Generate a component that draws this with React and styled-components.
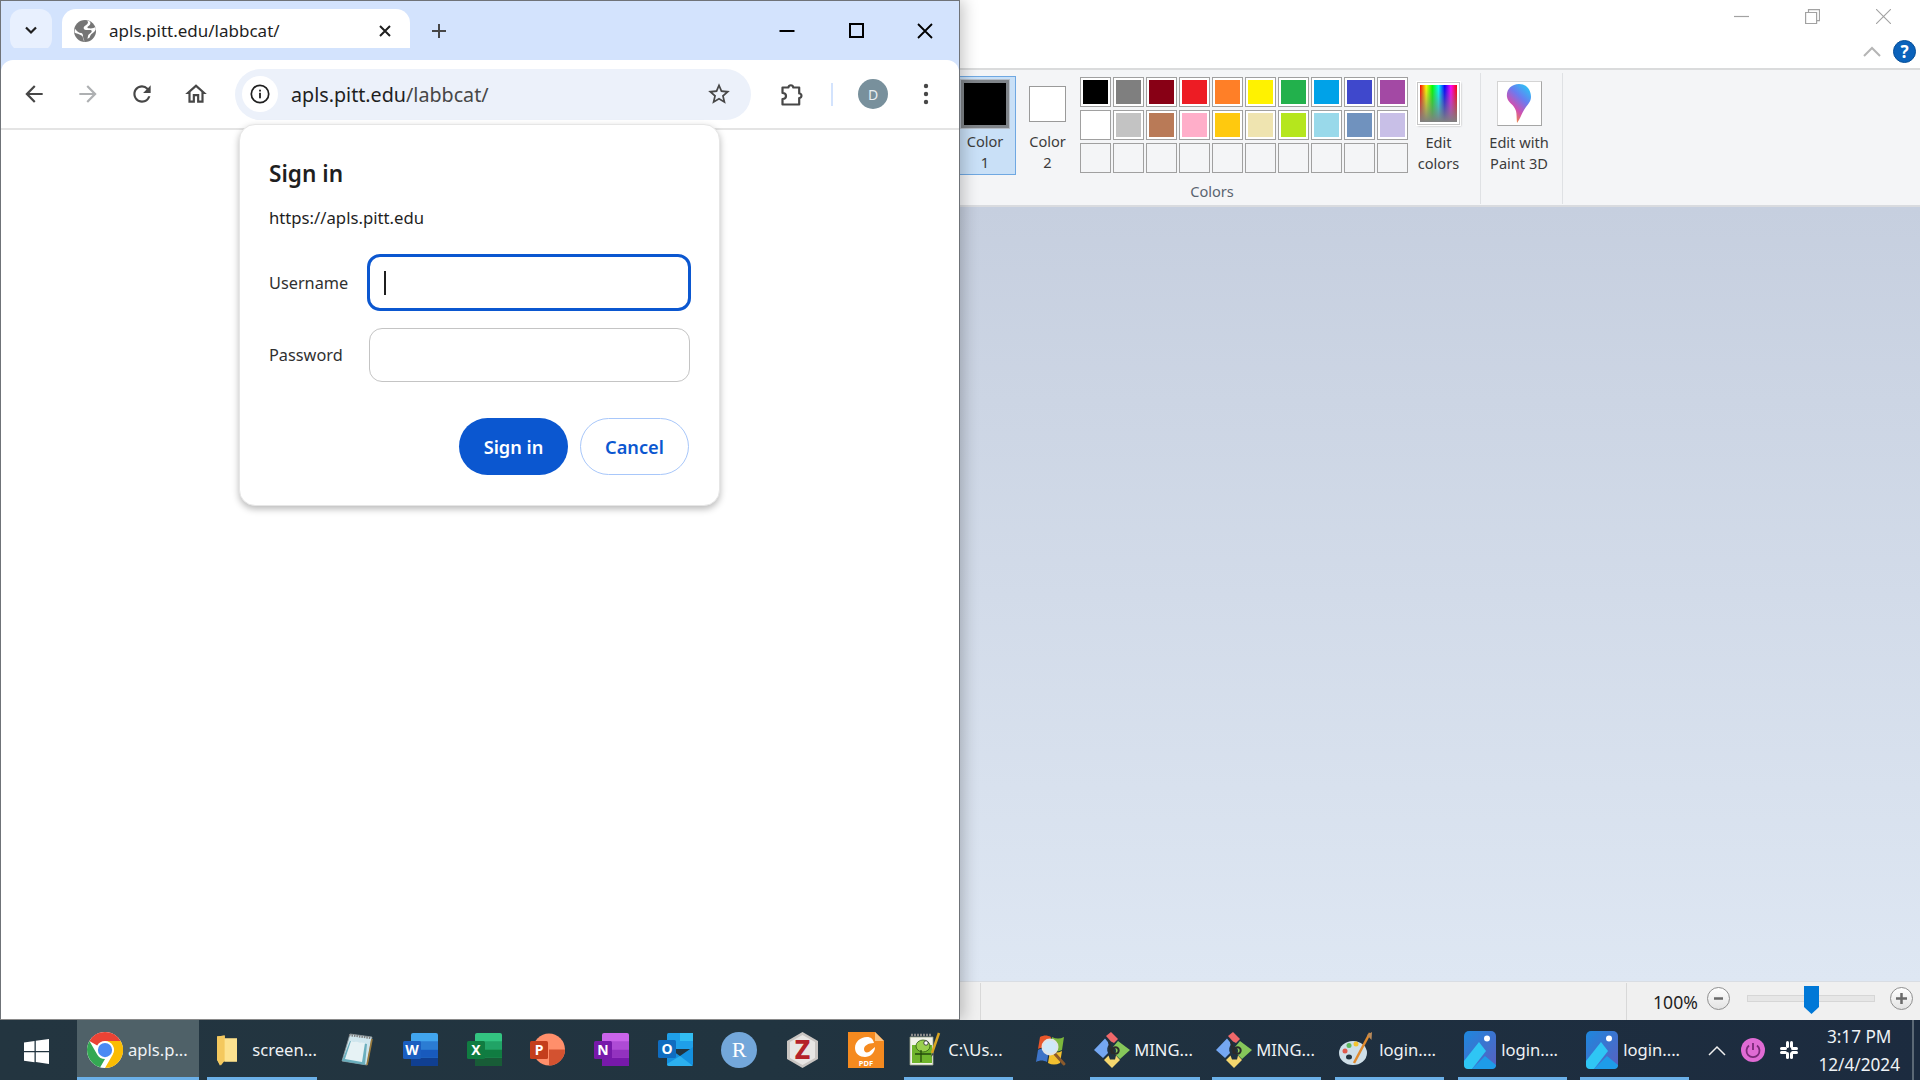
import React from 'react';
import styled, { createGlobalStyle } from 'styled-components';

const Global = createGlobalStyle`
  html, body { margin: 0; padding: 0; width: 1920px; height: 1080px; overflow: hidden; background: #fff; }
  * { box-sizing: border-box; }
  body { font-family: "Noto Sans", "Open Sans", sans-serif; color: #1f1f1f; }
`;

const Desktop = styled.div`
  width: 1920px; height: 1080px; display: flex; flex-direction: column; overflow: hidden;
`;
const Workspace = styled.div`
  display: flex; height: 1020px; position: relative;
`;

/* Chrome window */
const ChromeWindow = styled.div`
  width: 960px; height: 1020px; flex: none; display: flex; flex-direction: column; position: relative; z-index: 2;
  border: 1px solid #6f7378; border-bottom-color: #8a8a8a; background: #fff;
  box-shadow: 4px 0 14px rgba(0,0,0,.22);
`;
const TabStrip = styled.div`
  height: 59px; flex: none; background: #d3e3fd; display: flex; align-items: flex-end; padding-left: 9px;
`;
const TabSearch = styled.div`
  width: 42px; height: 42px; margin-bottom: 9px; border-radius: 12px; background: #e8f0fe;
  display: flex; align-items: center; justify-content: center;
`;
const Tab = styled.div`
  position: relative; width: 348px; height: 51px; margin-left: 10px; background: #fff; border-radius: 14px 14px 0 0;
  display: flex; align-items: center; padding: 0 18px 8px 12px;
  &::before, &::after { content: ""; position: absolute; bottom: 0; width: 12px; height: 12px; }
  &::before { left: -12px; background: radial-gradient(circle at 0 0, transparent 11.5px, #fff 12px); }
  &::after { right: -12px; background: radial-gradient(circle at 100% 0, transparent 11.5px, #fff 12px); }
`;
const TabTitle = styled.span`
  margin-left: 13px; font-size: 17px; flex: 1; color: #1f1f1f; white-space: nowrap;
`;
const NewTab = styled.div`
  width: 30px; height: 30px; margin: 0 0 14px 14px; display: flex; align-items: center; justify-content: center;
`;
const WindowButtons = styled.div`
  margin-left: auto; height: 100%; display: flex; align-items: flex-start; padding: 22px 26px 0 0; gap: 53px;
`;
const Toolbar = styled.div`
  height: 70px; flex: none; display: flex; align-items: center; position: relative; background: #fff;
  border-radius: 12px 12px 0 0; border-bottom: 2px solid #e4e4e4; padding: 0 0 0 20px;
  box-shadow: 0 -12px 0 0 #d3e3fd;
`;
const NavButton = styled.div`
  width: 26px; height: 26px; margin-right: ${p => p.$mr ?? 28}px; margin-left: ${p => p.$ml || 0}px; flex: none; color: ${p => p.$color || '#474747'};
  display: flex; align-items: center; justify-content: center;
`;
const Omnibox = styled.div`
  width: 516px; height: 51px; border-radius: 26px; background: #ecf1fa; margin-left: 26px; flex: none;
  display: flex; align-items: center; padding: 0 12px 0 7px;
`;
const InfoChip = styled.div`
  width: 36px; height: 36px; border-radius: 50%; background: #fff; display: flex; align-items: center; justify-content: center; flex: none;
`;
const UrlText = styled.div`
  margin-left: 13px; font-size: 19.7px; color: #1f1f1f; flex: 1; white-space: nowrap;
  span { color: #474747; }
`;
const ToolbarDivider = styled.div`
  width: 2px; height: 23px; background: #d3e3fd; margin: 0 25px 0 26px; flex: none;
`;
const Avatar = styled.div`
  width: 30px; height: 30px; border-radius: 50%; background: #78909c; color: #e8eef2; font-size: 14px; flex: none;
  display: flex; align-items: center; justify-content: center;
`;
const Page = styled.div`
  flex: 1; position: relative; background: #fff;
`;

/* Sign-in dialog */
const Dialog = styled.div`
  position: absolute; left: 238px; top: -6px; width: 481px; height: 382px; background: #fff; border-radius: 16px;
  border: 1px solid #e6e6e6; box-shadow: 0 3px 7px rgba(0,0,0,.28); padding: 34px 30px 0 29px;
  display: flex; flex-direction: column;
`;
const DialogTitle = styled.h2`
  margin: 0; font-size: 22.6px; line-height: 30px; font-weight: 600; color: #1f1f1f;
`;
const Origin = styled.div`
  margin-top: 17px; font-size: 16.7px; line-height: 24px; color: #1f1f1f;
`;
const FormRow = styled.div`
  display: flex; align-items: center; height: ${p => p.$h}px; margin-top: ${p => p.$mt}px;
`;
const FieldLabel = styled.label`
  width: ${p => p.$w}px; font-size: 16.3px; color: #303030; flex: none;
`;
const Field = styled.div`
  flex: none; border-radius: 13px; background: #fff; display: flex; align-items: center;
  width: ${p => p.$focus ? 324 : 321}px; height: ${p => p.$focus ? 57 : 54}px;
  border: ${p => p.$focus ? '3px solid #0b57d0' : '1.5px solid #c4c4c4'};
  padding-left: 14px;
`;
const Caret = styled.div`
  width: 1.5px; height: 24px; background: #1f1f1f;
`;
const Actions = styled.div`
  display: flex; justify-content: flex-end; gap: 12px; margin-top: 36px; padding-right: 0;
`;
const DialogButton = styled.button`
  width: 109px; height: 57px; border-radius: 29px; font: 600 18.2px "Noto Sans", sans-serif; padding: 0; cursor: pointer;
  background: ${p => p.$primary ? '#0b57d0' : '#fff'}; color: ${p => p.$primary ? '#fff' : '#0b57d0'};
  border: ${p => p.$primary ? 'none' : '1.5px solid #a8c7fa'};
`;

/* Paint window */
const PaintWindow = styled.div`
  flex: 1; display: flex; flex-direction: column; background: #fff; min-width: 0;
`;
const PaintTitle = styled.div`
  height: 68px; flex: none; background: #fff; display: flex; flex-direction: column; align-items: flex-end;
  padding: 9px 4px 0 0;
`;
const PaintControls = styled.div`
  display: flex; gap: 56px; height: 15px; padding-right: 25px; margin-bottom: 15px;
`;
const PaintHelpRow = styled.div`
  display: flex; align-items: center; gap: 12px; height: 24px;
`;
const Ribbon = styled.div`
  height: 139px; flex: none; background: #f4f5f7; border-top: 2px solid #dadbdc; border-bottom: 2px solid #d9dbdf;
  display: flex; padding-top: 3px;
`;
const ColorsGroup = styled.div`
  width: 521px; flex: none; height: 131px; border-right: 1.5px solid #dfe1e4; display: flex; flex-direction: column;
`;
const ColorsRow = styled.div`
  display: flex; height: 108px; padding-top: 3px;
`;
const ColorSlot = styled.div`
  height: 99px; flex: none; width: ${p => p.$w}px; margin-left: ${p => p.$ml || 0}px;
  display: flex; flex-direction: column; align-items: center;
  padding-top: ${p => p.$pt}px; padding-right: ${p => p.$pr || 0}px; position: relative;
  background: ${p => p.$active ? '#c9e0f7' : 'transparent'};
  border: 1px solid ${p => p.$active ? '#6fa8e2' : 'transparent'}; border-left: none;
`;
const BigSwatch = styled.div`
  width: ${p => p.$w}px; height: ${p => p.$h}px; background: ${p => p.$color};
  border: ${p => p.$thick ? '3px solid #7f8489' : '1.5px solid #9a9a9a'};
  outline: ${p => p.$thick ? '1px solid #b6bec8' : 'none'};
  margin-bottom: ${p => p.$mb}px; flex: none;
`;
const RibbonLabel = styled.div`
  font-size: 14.6px; line-height: 21px; text-align: center; color: #3c3c3c; white-space: pre-line;
`;
const Palette = styled.div`
  display: grid; grid-template-columns: repeat(10, 31px); grid-auto-rows: 30px; gap: 3px 2px; margin-left: 2px; flex: none; margin-top: 1px;
`;
const Swatch = styled.div`
  background: ${p => p.$color || '#f4f5f7'}; border: 1px solid #a0a0a0;
  box-shadow: ${p => p.$color ? 'inset 0 0 0 2px #fff' : 'none'};
`;
const RainbowBox = styled.div`
  width: 43px; height: 43px; border: 1.5px solid #c5c5c5; outline: 1px solid #fff; margin-bottom: 7px; flex: none;
  padding: 2px; background: #fff; box-shadow: 1px 1px 2px rgba(0,0,0,.3);
  &::before { content: ""; display: block; width: 100%; height: 100%;
    background: linear-gradient(to bottom, rgba(128,128,128,0) 0%, rgba(128,128,128,1) 100%),
      linear-gradient(to right, #f00, #ff0, #0f0, #0ff, #00f, #f0f, #f00); }
`;
const ColorsLabel = styled.div`
  font-size: 14.6px; text-align: center; color: #5a6470; padding-right: 16px; line-height: 20px;
`;
const Paint3DGroup = styled.div`
  width: 82px; height: 131px; flex: none; border-right: 1.5px solid #dfe1e4; display: flex; flex-direction: column; align-items: center;
  padding: 8px 5px 0 0;
`;
const Paint3DIcon = styled.div`
  width: 45px; height: 45px; background: #fff; border: 1.5px solid #a6a6a6; border-top-color: #d4d4d4; border-left-color: #d4d4d4;
  display: flex; align-items: center; justify-content: center; margin-bottom: 6px; flex: none;
`;
const Canvas = styled.div`
  flex: 1; background: linear-gradient(to bottom, #c6cfdf 0%, #dee7f3 100%);
`;
const StatusBar = styled.div`
  height: 39px; flex: none; background: #f0f0f0; border-top: 1.5px solid #d9dde3; display: flex; align-items: center; position: relative;
`;
const StatusSegment = styled.div`
  width: ${p => p.$w}px; height: 37px; flex: none; border-left: ${p => p.$first ? 'none' : '1.5px solid #d8d8d8'};
`;
const ZoomPart = styled.div`
  flex: 1; border-left: 1.5px solid #d8d8d8; height: 37px; display: flex; align-items: center; padding-left: 26px;
`;
const ZoomText = styled.span`
  font-size: 17.6px; width: 47px; color: #1f1f1f; padding-top: 2px; white-space: nowrap;
`;
const ZoomBtn = styled.div`
  width: 23px; height: 23px; border-radius: 50%; border: 1.5px solid #8f8f8f; background: linear-gradient(#fff, #e3e3e3);
  display: flex; align-items: center; justify-content: center; flex: none; margin: ${p => p.$m}; margin-bottom: 5px;
  color: #6a6a6a;
`;
const SliderTrack = styled.div`
  width: 128px; height: 7px; background: #e6e6e6; border: 1px solid #d6d6d6; position: relative; flex: none; margin: 0 0 6px 17px;
`;
const SliderThumb = styled.svg`
  position: absolute; left: 56px; top: -10px;
`;

/* Taskbar */
const Taskbar = styled.div`
  height: 60px; flex: none; display: flex; color: #f2f5f7; position: relative; z-index: 3;
  background: linear-gradient(to right, #233540 0%, #213440 40%, #1c2b3f 100%);
`;
const StartButton = styled.div`
  width: 77px; display: flex; align-items: center; justify-content: center; flex: none; padding: 2px 5px 0 0;
`;
const TaskItem = styled.div`
  flex: none; height: 60px; width: ${p => p.$w}px; margin-left: ${p => p.$ml || 0}px;
  display: flex; align-items: center; justify-content: ${p => p.$label ? 'flex-start' : 'center'};
  padding-left: ${p => p.$label ? (p.$pl ?? 5) : 0}px; padding-top: 2px;
  border-bottom: 3px solid ${p => p.$open ? '#6bb0e8' : 'transparent'};
  background: ${p => p.$active ? '#4f6168' : 'transparent'};
  position: relative;
`;
const TaskLabel = styled.span`
  margin-left: ${p => p.$ml ?? 5}px; font-size: 16.6px; color: #eef2f5; white-space: nowrap;
`;
const Tray = styled.div`
  display: flex; align-items: center; margin-left: 19px; flex: none; height: 60px;
`;
const TraySpace = styled.span`
  width: ${p => p.$w}px;
`;
const Clock = styled.div`
  width: 92px; margin-left: 14px; text-align: center; font-size: 17.2px; line-height: 28px; padding-top: 2px; color: #eef2f5; white-space: nowrap;
`;
const EdgeLine = styled.div`
  position: absolute; right: 6px; top: 0; bottom: 0; width: 2px; background: #5b6875;
`;

/* icons */
const Svg = ({ s = 24, w, h, vb = '0 0 24 24', children, ...r }) => (
  <svg width={w ?? s} height={h ?? s} viewBox={vb} {...r}>{children}</svg>
);
const P = ({ d }) => <Svg s={26}><path d={d} fill="currentColor" /></Svg>;
const BACK = 'M20 11H7.83l5.59-5.59L12 4l-8 8 8 8 1.41-1.41L7.83 13H20v-2z';
const FWD = 'M4 11h12.17l-5.59-5.59L12 4l8 8-8 8-1.41-1.41L16.17 13H4v-2z';
const RELOAD = 'M17.65 6.35A7.96 7.96 0 0 0 12 4c-4.42 0-7.99 3.58-7.99 8s3.57 8 7.99 8c3.73 0 6.84-2.55 7.73-6h-2.08A5.99 5.99 0 0 1 12 18c-3.31 0-6-2.69-6-6s2.69-6 6-6c1.66 0 3.14.69 4.22 1.78L13 11h7V4l-2.35 2.35z';
const HOME = 'M12 5.69l5 4.5V18h-2v-6H9v6H7v-7.81l5-4.5M12 3L2 12h3v8h6v-6h2v6h6v-8h3L12 3z';
const STAR = 'M22 9.24l-7.19-.62L12 2 9.19 8.63 2 9.24l5.46 4.73L5.82 21 12 17.27 18.18 21l-1.63-7.03L22 9.24zM12 15.4l-3.76 2.27 1-4.28-3.32-2.88 4.38-.38L12 6.1l1.71 4.04 4.38.38-3.32 2.88 1 4.28L12 15.4z';

const Globe = () => (
  <Svg s={22} vb="0 0 22 22">
    <circle cx="11" cy="11" r="11" fill="#757575" />
    <path d="M0.800 8.500C2.500 11 5 13 7 13c1.500 0 2 1.500 2 3 0 2 1 4 1.800 6H11c-3-3-1-5-3.500-6.500C5 14 2.200 13.500.5 12.500z" fill="#fff" />
    <path d="M13 .4c1.800 1.400 1 3.400-.8 4.600-1.500 1-3 2-2.500 3.600.5 1.600 3 1.600 4.800 1.400 1.500-.2 3-.3 3.200 1 .2 1.400-1.500 2.400-2.700 3.200-1.200.8-1 3-1.600 4.600l2 -1c1-2 1-3 2.500-4 1.600-1 3.500-3 3.900-4.500l-.5-2.300c-.8.6-2.600 1.300-4.600 1.400-1.500 0-3.200 0-3.300-.8 0-1 1.400-1.500 2.300-2.500.8-1 1-2.300.2-3.600z" fill="#fff" />
  </Svg>
);
const Chevron = () => (
  <Svg s={14} vb="0 0 14 14"><path d="M2 4.500l5 5 5-5" fill="none" stroke="#1f1f1f" strokeWidth="2.200" /></Svg>
);
const TabClose = () => (
  <Svg s={14} vb="0 0 14 14"><path d="M2 2l10 10M12 2L2 12" stroke="#1f1f1f" strokeWidth="2" /></Svg>
);
const Plus = () => (
  <Svg s={16} vb="0 0 16 16"><path d="M8 1v14M1 8h14" stroke="#474747" strokeWidth="2" /></Svg>
);
const WinMin = () => <Svg s={16} vb="0 0 16 16"><path d="M0.500 8h15" stroke="#000" strokeWidth="2" /></Svg>;
const WinMax = () => <Svg s={16} vb="0 0 16 16"><rect x="2" y="1" width="13" height="13" fill="none" stroke="#000" strokeWidth="2" /></Svg>;
const WinClose = () => <Svg s={16} vb="0 0 16 16"><path d="M1 1l14 14M15 1L1 15" stroke="#000" strokeWidth="1.800" /></Svg>;
const Info = () => (
  <Svg s={20} vb="0 0 20 20">
    <circle cx="10" cy="10" r="8.700" fill="none" stroke="#1f1f1f" strokeWidth="1.700" />
    <rect x="9.100" y="8.800" width="1.800" height="5.500" fill="#1f1f1f" />
    <rect x="9.100" y="5.700" width="1.800" height="1.800" fill="#1f1f1f" />
  </Svg>
);
const Puzzle = () => (
  <Svg s={26} vb="0 0 26 26">
    <path d="M3.500 6.500h6c-.3-3 5-3 4.700 0h6v6c3-.3 3 4.700 0 4.500v6.500H3.500v-5.500c3 0 3.500-1.500 3.500-3s-.6-3-3.500-3z" fill="none" stroke="#474747" strokeWidth="2.200" strokeLinejoin="round" />
  </Svg>
);
const Dots = () => (
  <Svg s={26} vb="0 0 26 26">
    <circle cx="13" cy="5" r="2.200" fill="#474747" /><circle cx="13" cy="13" r="2.200" fill="#474747" /><circle cx="13" cy="21" r="2.200" fill="#474747" />
  </Svg>
);
const PMin = () => <Svg w={15} h={15} vb="0 0 15 15"><path d="M0 7.500h15" stroke="#a2a2a2" strokeWidth="1.200" /></Svg>;
const PRestore = () => (
  <Svg s={15} vb="0 0 15 15"><path d="M3.500 3V.6h11v11H12M.6 3.500h11v11H.6z" fill="none" stroke="#a2a2a2" strokeWidth="1.200" /></Svg>
);
const PClose = () => <Svg s={15} vb="0 0 15 15"><path d="M0 0l15 15M15 0L0 15" stroke="#a2a2a2" strokeWidth="1.100" /></Svg>;
const RibbonUp = () => <Svg w={18} h={11} vb="0 0 18 11"><path d="M1 10l8-8 8 8" fill="none" stroke="#b5b5b5" strokeWidth="2" /></Svg>;
const Help = () => (
  <Svg s={23} vb="0 0 23 23">
    <circle cx="11.500" cy="11.500" r="11" fill="#0a62bb" stroke="#064e98" strokeWidth="1" />
    <text x="11.500" y="17.500" textAnchor="middle" fontSize="17" fontWeight="700" fill="#fff" fontFamily="Noto Sans">?</text>
  </Svg>
);
const Balloon = () => (
  <Svg w={30} h={41} vb="0 0 30 41">
    <defs>
      <linearGradient id="bal" x1="0.800" y1="0" x2="0.200" y2="1">
        <stop offset="0" stopColor="#29c6f6" /><stop offset=".35" stopColor="#6a7cf0" /><stop offset=".65" stopColor="#d04fb0" /><stop offset="1" stopColor="#f8a020" />
      </linearGradient>
    </defs>
    <path d="M15 1C7 1 2 7 3 14c.8 6 7 7 9 14 .8 3 .6 8 1 12 3-4 4-8 7-13 3-5 7-8 7-13C27 7 23 1 15 1z" fill="url(#bal)" />
  </Svg>
);

/* taskbar app icons */
const ChromeIcon = () => (
  <Svg s={36} vb="0 0 48 48">
    <circle cx="24" cy="24" r="24" fill="#fff" />
    <path d="M24 0a24 24 0 0 1 20.800 12H24a12 12 0 0 0-10.400 6L3.200 12A24 24 0 0 1 24 0z" fill="#ea4335" />
    <path d="M3.200 12l10.400 18A12 12 0 0 0 24 36l-6.400 11.100A24 24 0 0 1 3.200 12z" fill="#34a853" />
    <path d="M44.800 12A24 24 0 0 1 24 48l10.400-18A12 12 0 0 0 24 12z" fill="#fbbc04" />
    <circle cx="24" cy="24" r="9.500" fill="#4a8af4" />
  </Svg>
);
const WinLogo = () => (
  <Svg s={25} vb="0 0 25 25">
    <path d="M0 3.500l10.500-1.500v10H0zM11.800 1.800L25 0v12H11.800zM0 13.200h10.500v10L0 21.700zM11.800 13.200H25V25l-13.200-1.900z" fill="#fff" />
  </Svg>
);
const Folder = () => (
  <Svg w={21} h={32} vb="0 0 21 32">
    <path d="M0 2l8 -1v3h13v24H6l-3 4-3-6z" fill="#fbd774" />
    <path d="M0 2l8-1v26l-4 5-4-6z" fill="#f4c85e" />
    <path d="M8 4h13v24H8z" fill="#fde28f" />
  </Svg>
);
const NotepadIcon = () => (
  <Svg w={32} h={33} vb="0 0 32 33">
    <path d="M9 1l22 3-5 28L1 28z" fill="#cfe6ee" stroke="#8e989c" strokeWidth=".8" />
    <path d="M1 28L9 8l17 3-2 21z" fill="#5fa9b8" opacity=".9" />
    <path d="M10 8l14 2-3 19L4 26z" fill="#e6f2f5" />
    <path d="M8 2l22 3" stroke="#7d7d7d" strokeWidth="2.200" strokeDasharray="1.500 1" />
    <path d="M31 6l-5 26" stroke="#9a7a3c" strokeWidth="1.600" />
  </Svg>
);
const OfficeIcon = ({ back, letter, tile, parts }) => (
  <Svg w={35} h={33} vb="0 0 35 33">
    {back === 'round'
      ? <circle cx="19" cy="16.500" r="16" fill={parts[0]} />
      : <rect x="8" y="0" width="27" height="33" rx="2" fill={parts[0]} />}
    {back !== 'round' && parts.slice(1).map((c, i) => (
      <rect key={c + i} x="8" y={(i + 1) * 8.250} width="27" height="8.250" fill={c} />
    ))}
    {back === 'round' && <path d="M19 16.500h16a16 16 0 0 1-16 16z" fill={parts[1]} />}
    <rect x="0" y="8" width="18" height="18" rx="1.500" fill={tile} />
    <text x="9" y="22" textAnchor="middle" fontSize="14" fontWeight="700" fill="#fff" fontFamily="Noto Sans">{letter}</text>
  </Svg>
);
const OutlookIcon = () => (
  <Svg w={35} h={33} vb="0 0 35 33">
    <rect x="9" y="0" width="26" height="16" rx="1.500" fill="#1f9fe8" />
    <rect x="22" y="0" width="13" height="8" fill="#32bdf2" />
    <path d="M9 14l13 9 13-9v17a2 2 0 0 1-2 2H11a2 2 0 0 1-2-2z" fill="#1490df" />
    <path d="M9 31l13-8 13 10H11a2 2 0 0 1-2-2z" fill="#2cb0ee" />
    <rect x="0" y="7" width="18" height="18" rx="1.500" fill="#0f6cc0" />
    <text x="9" y="21" textAnchor="middle" fontSize="14" fontWeight="700" fill="#fff" fontFamily="Noto Sans">O</text>
  </Svg>
);
const RIcon = () => (
  <Svg s={36} vb="0 0 36 36">
    <circle cx="18" cy="18" r="18" fill="#73a7da" />
    <text x="18" y="25" textAnchor="middle" fontSize="22" fill="#fff" fontFamily="Liberation Serif">R</text>
  </Svg>
);
const ZoteroIcon = () => (
  <Svg w={31} h={36} vb="0 0 31 36">
    <path d="M15.500 0L31 9v18l-15.500 9L0 27V9z" fill="#c9c5c2" />
    <path d="M15.500 3L28 10v16l-12.500 7L3 26V10z" fill="#e8e6e4" />
    <text x="15.500" y="27" textAnchor="middle" fontSize="26" fontWeight="800" fill="#b5222a" fontFamily="Noto Sans">Z</text>
  </Svg>
);
const FoxitIcon = () => (
  <Svg s={36} vb="0 0 36 36">
    <path d="M0 0h27l9 9v27H0z" fill="#f58a1f" />
    <path d="M27 0l9 9h-9z" fill="#fbc27f" />
    <path d="M19 5c-7 0-12 5-12 11 0 6 5 9 10 9s10-4 10-10l-6 5c-3 1-5 0-5-3 0-3 4-6 10-6-1-4-3-6-7-6z" fill="#fff" />
    <text x="18" y="33.500" textAnchor="middle" fontSize="7.500" fontWeight="700" fill="#fff" fontFamily="Noto Sans">PDF</text>
  </Svg>
);
const NotepadPP = () => (
  <Svg w={32} h={36} vb="0 0 32 36">
    <path d="M1 5h23v28H1z" fill="#f2f3ea" stroke="#9aa28c" strokeWidth=".8" />
    <path d="M2 3h21" stroke="#888" strokeWidth="2.500" strokeDasharray="2 1" />
    <path d="M3 13h20v18H3z" fill="#6fb52c" />
    <ellipse cx="14" cy="14" rx="7" ry="6" fill="#9ad04e" stroke="#2d5a10" strokeWidth=".8" />
    <circle cx="17" cy="11" r="2.200" fill="#fff" stroke="#222" strokeWidth=".8" />
    <path d="M6 22h16M12 18v12" stroke="#254a0c" strokeWidth="1.300" />
    <path d="M30 1L23 21" stroke="#d9a520" strokeWidth="2.500" />
    <path d="M23 21l-1 4 3-3" fill="#444" />
  </Svg>
);
const SearchFlag = () => (
  <Svg w={34} h={34} vb="0 0 34 34">
    <path d="M5 4c4-2 7-2 11 0l-2 12c-4-2-7-2-11 0z" fill="#e8562a" />
    <path d="M17 4c4 2 8 2 12 0l-2 13c-4 2-8 2-12 0z" fill="#7cb73c" />
    <path d="M3 17c4-2 7-2 11 0l-2 12c-4-2-7-2-11 0z" fill="#3d74c8" />
    <path d="M15 18c4 2 8 2 12 0l-2 12c-4 2-8 2-12 0z" fill="#f2c02f" />
    <path d="M20 21l9 10" stroke="#8a5a2c" strokeWidth="3" strokeLinecap="round" />
    <circle cx="15" cy="14" r="7.500" fill="#cfe8f8" stroke="#dfe3e6" strokeWidth="2" />
  </Svg>
);
const GitIcon = () => (
  <Svg s={36} vb="0 0 36 36">
    <path d="M12 4l5-4 7 7-4 4-3-1.500z" fill="#f0686a" />
    <path d="M24 9l12 9-10 9-5-5c2-3 1-6-2-7z" fill="#86c75a" />
    <path d="M11 6.500l4.500 5.500c-2.500 2.500-3 6-1.500 9l-5 5L0 18z" fill="#74a7f2" />
    <path d="M10 28l4.500-4.500 1.500 4h5l1-4 4 4.500-8 8z" fill="#f5d76e" />
    <path d="M15 10l3 12" stroke="#2b2b2b" strokeWidth="2.200" />
    <circle cx="21.500" cy="18.500" r="3.200" fill="none" stroke="#2b2b2b" strokeWidth="2" />
  </Svg>
);
const PaintIcon = () => (
  <Svg w={34} h={36} vb="0 0 34 36">
    <ellipse cx="14" cy="21" rx="14" ry="12" fill="#cfdfe8" />
    <ellipse cx="10" cy="25" rx="3" ry="2.500" fill="#223440" />
    <circle cx="6" cy="19" r="2.500" fill="#e05a4c" />
    <circle cx="10" cy="13.500" r="2.500" fill="#5cb85c" />
    <circle cx="17" cy="12" r="2.500" fill="#f4c42e" />
    <path d="M31 1L15 31" stroke="#e08a2e" strokeWidth="2.500" />
    <path d="M28 3l5-3-.5 8z" fill="#b98a5a" />
  </Svg>
);
const PhotosIcon = ({ id }) => (
  <Svg w={32} h={38} vb="0 0 32 38">
    <defs>
      <linearGradient id={id} x1="0" y1="0" x2="1" y2="1">
        <stop offset="0" stopColor="#1d88de" /><stop offset="1" stopColor="#5a5fc0" />
      </linearGradient>
    </defs>
    <rect width="32" height="38" rx="5" fill={`url(#${id})`} />
    <circle cx="23" cy="7.500" r="3" fill="#fff" />
    <path d="M0 30l15-19 7 9 -14 18H4a4 4 0 0 1-4-4z" fill="#2fc6f4" />
    <path d="M8 38l13-13 11 9v0a4 4 0 0 1-4 4z" fill="#1e9ce8" />
  </Svg>
);
const TrayUp = () => <Svg w={18} h={11} vb="0 0 18 11"><path d="M1 10l8-8 8 8" fill="none" stroke="#f0f0f0" strokeWidth="1.500" /></Svg>;
const PowerIcon = () => (
  <Svg w={24} h={24} vb="0 0 24 24">
    <circle cx="12" cy="12" r="12" fill="#e06bd4" />
    <path d="M12 5v7" stroke="#7a2a78" strokeWidth="1.800" />
    <path d="M8 7.500a6.500 6.500 0 1 0 8 0" fill="none" stroke="#7a2a78" strokeWidth="1.800" />
  </Svg>
);
const SlackIcon = () => (
  <Svg s={20} vb="0 0 20 20">
    <g fill="#fff">
      <rect x="7" y="1" width="3" height="7" rx="1.500" /><rect x="11" y="1" width="3" height="7" rx="1.500" />
      <rect x="12" y="7" width="7" height="3" rx="1.500" /><rect x="12" y="11" width="7" height="3" rx="1.500" />
      <rect x="1" y="7" width="7" height="3" rx="1.500" /><rect x="1" y="11" width="7" height="3" rx="1.500" />
      <rect x="7" y="12" width="3" height="7" rx="1.500" /><rect x="11" y="12" width="3" height="7" rx="1.500" />
    </g>
  </Svg>
);

const ROW1 = ['#000000', '#7f7f7f', '#880015', '#ed1c24', '#ff7f27', '#fff200', '#22b14c', '#00a2e8', '#3f48cc', '#a349a4'];
const ROW2 = ['#ffffff', '#c3c3c3', '#b97a57', '#ffaec9', '#ffc90e', '#efe4b0', '#b5e61d', '#99d9ea', '#7092be', '#c8bfe7'];
const ROW3 = Array(10).fill(null);

const pinned = [
  ['n', <NotepadIcon />],
  ['w', <OfficeIcon letter="W" tile="#1a5ec0" parts={['#41a5ee', '#2b7cd3', '#185abd', '#103f91']} />],
  ['x', <OfficeIcon letter="X" tile="#107c41" parts={['#33c481', '#21a366', '#107c41', '#185c37']} />],
  ['p', <OfficeIcon back="round" letter="P" tile="#c43e1c" parts={['#ff8f6b', '#d35230']} />],
  ['o', <OfficeIcon letter="N" tile="#7719aa" parts={['#ca64ea', '#ae4bd5', '#9332bf', '#7719aa']} />],
  ['ol', <OutlookIcon />],
  ['r', <RIcon />],
  ['z', <ZoteroIcon />],
  ['f', <FoxitIcon />],
];

export default function App() {
  return (
    <Desktop>
      <Global />
      <Workspace>
        <ChromeWindow>
          <TabStrip>
            <TabSearch><Chevron /></TabSearch>
            <Tab>
              <Globe />
              <TabTitle>apls.pitt.edu/labbcat/</TabTitle>
              <TabClose />
            </Tab>
            <NewTab><Plus /></NewTab>
            <WindowButtons>
              <WinMin /><WinMax /><WinClose />
            </WindowButtons>
          </TabStrip>
          <Toolbar>
            <NavButton><P d={BACK} /></NavButton>
            <NavButton $color="#aeb0b2"><P d={FWD} /></NavButton>
            <NavButton><P d={RELOAD} /></NavButton>
            <NavButton $mr={0}><P d={HOME} /></NavButton>
            <Omnibox>
              <InfoChip><Info /></InfoChip>
              <UrlText>apls.pitt.edu<span>/labbcat/</span></UrlText>
              <NavButton $mr={7}><P d={STAR} /></NavButton>
            </Omnibox>
            <NavButton $mr={0} $ml={28}><Puzzle /></NavButton>
            <ToolbarDivider />
            <Avatar>D</Avatar>
            <NavButton $mr={0} $ml={25}><Dots /></NavButton>
          </Toolbar>
          <Page>
            <Dialog>
              <DialogTitle>Sign in</DialogTitle>
              <Origin>https://apls.pitt.edu</Origin>
              <FormRow $h={57} $mt={24}>
                <FieldLabel $w={98} htmlFor="u">Username</FieldLabel>
                <Field $focus id="u"><Caret /></Field>
              </FormRow>
              <FormRow $h={54} $mt={17}>
                <FieldLabel $w={100} htmlFor="p">Password</FieldLabel>
                <Field id="p" />
              </FormRow>
              <Actions>
                <DialogButton $primary>Sign in</DialogButton>
                <DialogButton>Cancel</DialogButton>
              </Actions>
            </Dialog>
          </Page>
        </ChromeWindow>
        <PaintWindow>
          <PaintTitle>
            <PaintControls><PMin /><PRestore /><PClose /></PaintControls>
            <PaintHelpRow><RibbonUp /><Help /></PaintHelpRow>
          </PaintTitle>
          <Ribbon>
            <ColorsGroup>
              <ColorsRow>
                <ColorSlot $w={56} $active $pt={3} $pr={5}>
                  <BigSwatch $w={48} $h={48} $thick $color="#000" $mb={3} />
                  <RibbonLabel>{'Color\n1'}</RibbonLabel>
                </ColorSlot>
                <ColorSlot $w={60} $ml={2} $pt={9}>
                  <BigSwatch $w={37} $h={36} $color="#fff" $mb={9} />
                  <RibbonLabel>{'Color\n2'}</RibbonLabel>
                </ColorSlot>
                <Palette>
                  {ROW1.map(c => <Swatch key={c} $color={c} />)}
                  {ROW2.map(c => <Swatch key={c} $color={c} />)}
                  {ROW3.map((c, i) => <Swatch key={i} />)}
                </Palette>
                <ColorSlot $w={62} $pt={5}>
                  <RainbowBox />
                  <RibbonLabel>{'Edit\ncolors'}</RibbonLabel>
                </ColorSlot>
              </ColorsRow>
              <ColorsLabel>Colors</ColorsLabel>
            </ColorsGroup>
            <Paint3DGroup>
              <Paint3DIcon><Balloon /></Paint3DIcon>
              <RibbonLabel>{'Edit with\nPaint 3D'}</RibbonLabel>
            </Paint3DGroup>
          </Ribbon>
          <Canvas />
          <StatusBar>
            <StatusSegment $w={20} $first />
            <StatusSegment $w={646} />
            <ZoomPart>
              <ZoomText>100%</ZoomText>
              <ZoomBtn $m="0 0 0 7px"><Svg s={11} vb="0 0 11 11"><path d="M1 5.500h9" stroke="currentColor" strokeWidth="2.500" /></Svg></ZoomBtn>
              <SliderTrack>
                <SliderThumb width="15" height="28" viewBox="0 0 15 28"><path d="M0 0h15v21l-7.500 7L0 21z" fill="#0078d7" /></SliderThumb>
              </SliderTrack>
              <ZoomBtn $m="0 0 0 15px"><Svg s={13} vb="0 0 13 13"><path d="M1 6.500h11M6.500 1v11" stroke="currentColor" strokeWidth="2.500" /></Svg></ZoomBtn>
            </ZoomPart>
          </StatusBar>
        </PaintWindow>
      </Workspace>
      <Taskbar>
        <StartButton><WinLogo /></StartButton>
        <TaskItem $w={122} $active $open $label $pl={10}><ChromeIcon /><TaskLabel>apls.p...</TaskLabel></TaskItem>
        <TaskItem $w={110} $ml={8} $open $label $pl={10}><Folder /><TaskLabel $ml={15}>screen...</TaskLabel></TaskItem>
        <TaskItem $w={8} />
        {pinned.map(([k, icon]) => <TaskItem key={k} $w={63.7}>{icon}</TaskItem>)}
        <TaskItem $w={109} $ml={6} $open $label><NotepadPP /><TaskLabel $ml={7}>C:\Us...</TaskLabel></TaskItem>
        <TaskItem $w={70} $ml={4}><SearchFlag /></TaskItem>
        <TaskItem $w={110} $ml={3} $open $label $pl={4}><GitIcon /><TaskLabel $ml={4}>MING...</TaskLabel></TaskItem>
        <TaskItem $w={109} $ml={12} $open $label $pl={4}><GitIcon /><TaskLabel $ml={4}>MING...</TaskLabel></TaskItem>
        <TaskItem $w={109} $ml={14} $open $label $pl={4}><PaintIcon /><TaskLabel $ml={6}>login....</TaskLabel></TaskItem>
        <TaskItem $w={109} $ml={14} $open $label $pl={6}><PhotosIcon id="ph1" /><TaskLabel>login....</TaskLabel></TaskItem>
        <TaskItem $w={109} $ml={13} $open $label $pl={6}><PhotosIcon id="ph2" /><TaskLabel>login....</TaskLabel></TaskItem>
        <Tray>
          <TrayUp />
          <TraySpace $w={15} />
          <PowerIcon />
          <TraySpace $w={14} />
          <SlackIcon />
          <Clock>3:17 PM<br />12/4/2024</Clock>
        </Tray>
        <EdgeLine />
      </Taskbar>
    </Desktop>
  );
}
